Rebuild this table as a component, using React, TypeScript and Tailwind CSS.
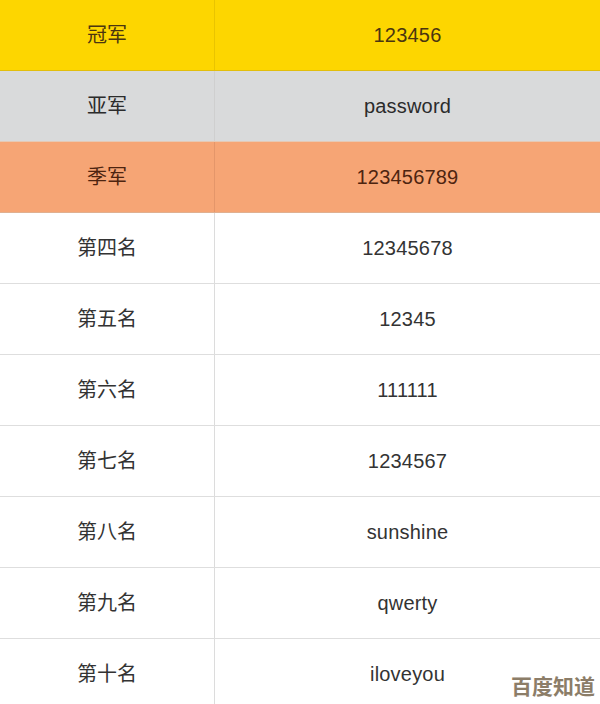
const rows = [
  { rank: '冠军', pwd: '123456', bg: 'bg-[#fdd600]', text: 'text-[#4a3510]', line: 'border-[#e2be0c]', div: 'border-r-[#e9c400]' },
  { rank: '亚军', pwd: 'password', bg: 'bg-[#d9dadb]', text: 'text-[#2b2b2b]', line: 'border-[#e6c9b4]', div: 'border-r-[#cfcfcf]' },
  { rank: '季军', pwd: '123456789', bg: 'bg-[#f6a575]', text: 'text-[#4d2410]', line: 'border-[#e0b090]', div: 'border-r-[#e4966a]' },
  { rank: '第四名', pwd: '12345678' },
  { rank: '第五名', pwd: '12345' },
  { rank: '第六名', pwd: '111111' },
  { rank: '第七名', pwd: '1234567' },
  { rank: '第八名', pwd: 'sunshine' },
  { rank: '第九名', pwd: 'qwerty' },
  { rank: '第十名', pwd: 'iloveyou' },
];

export default function App() {
  return (
    <div
      className="relative w-[600px] h-[704px] overflow-hidden bg-white"
      style={{ fontFamily: '"Liberation Sans", Arial, "Noto Sans CJK SC", sans-serif' }}
    >
      {rows.map((r) => (
        <div
          key={r.rank}
          className={`flex h-[71px] border-b ${r.bg ?? 'bg-white'} ${r.line ?? 'border-[#dedede]'} ${r.text ?? 'text-[#333333]'}`}
        >
          <div
            className={`w-[215px] shrink-0 flex items-center justify-center border-r text-[20px] ${r.div ?? 'border-r-[#dcdcdc]'}`}
          >
            {r.rank}
          </div>
          <div className="flex-1 flex items-center justify-center text-[20px] tracking-[0.2px]">{r.pwd}</div>
        </div>
      ))}

      {/* watermark */}
      <div className="absolute right-[5px] bottom-[2px] text-[21px] font-bold text-[#8c7d68] [text-shadow:0_0_3px_#fff]">
        百度知道
      </div>
    </div>
  );
}
